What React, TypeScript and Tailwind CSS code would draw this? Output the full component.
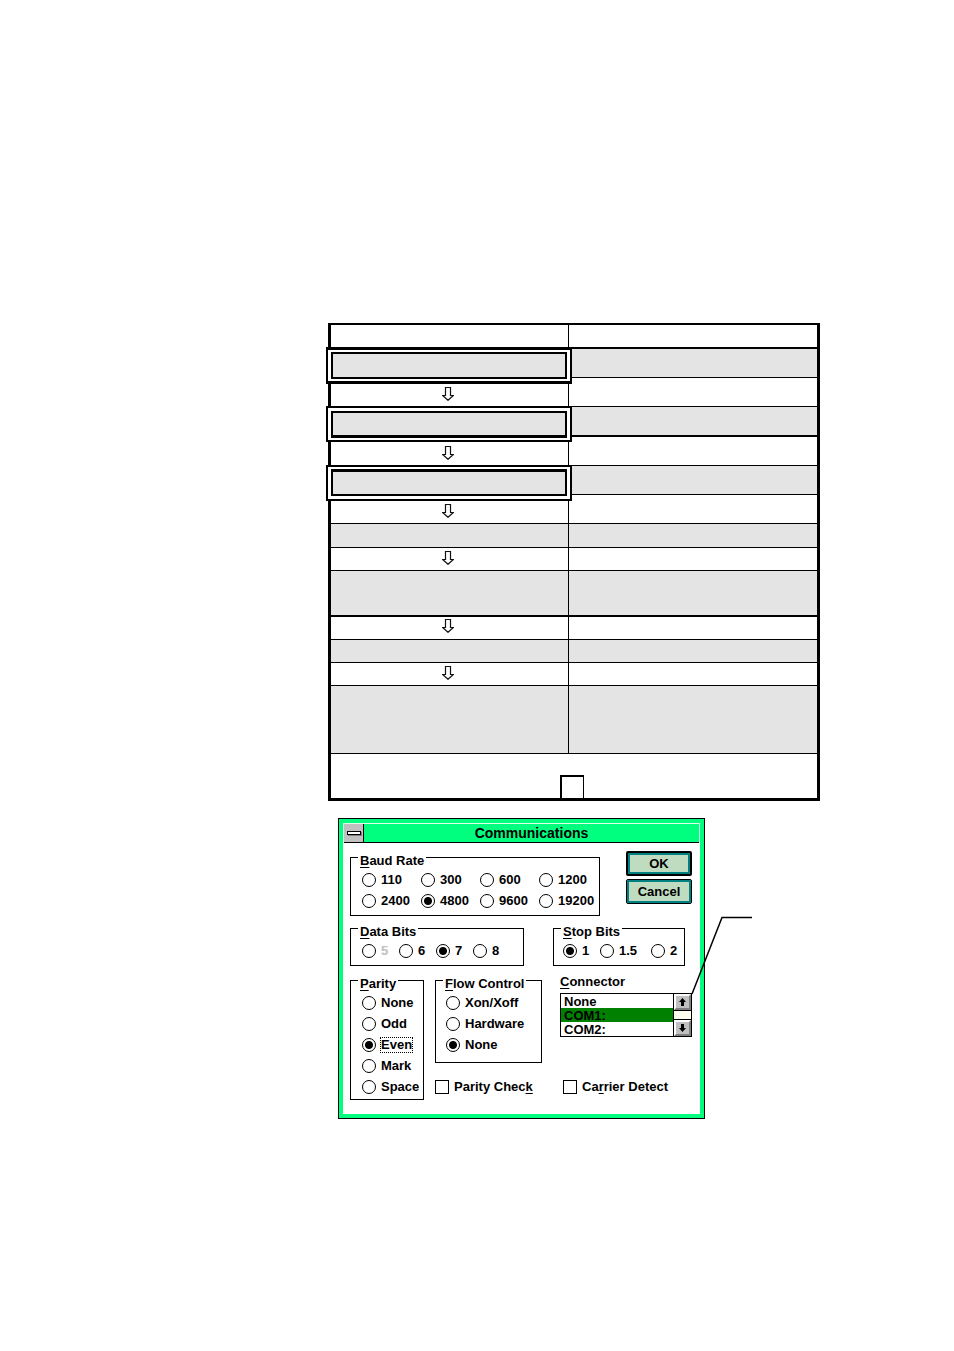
import { type ReactNode } from "react";

const DITHER =
  "bg-[#00ff80] bg-[conic-gradient(#00ff70_25%,#00ff8c_0_50%,#00ff70_0_75%,#00ff8c_0)] bg-[length:2px_2px]";

type Row = {
  height: string;
  shaded?: boolean;
  thick?: boolean;
  arrow?: string;
  frame?: [string, string];
};

const rows: Row[] = [
  { height: "h-6", thick: true },
  { height: "h-[29px]", shaded: true, frame: ["-top-[2px] h-[37px] border-y-[3px] py-[2px]", "border-2"] },
  { height: "h-[29px]", arrow: "pt-[9px]" },
  { height: "h-[30px]", shaded: true, thick: true, frame: ["-top-px h-9 pt-[3px] pb-[2px]", "border-2 border-b-[3px]"] },
  { height: "h-[29px]", arrow: "pt-[9px]" },
  { height: "h-[29px]", shaded: true, frame: ["-top-px h-9 pt-[2px] pb-[3px]", "border-2 border-t-[3px]"] },
  { height: "h-[29px]", arrow: "pt-[9px]" },
  { height: "h-6", shaded: true },
  { height: "h-[23px]", arrow: "pt-[3px]" },
  { height: "h-[46px]", shaded: true, thick: true },
  { height: "h-[23px]", arrow: "pt-[2px]" },
  { height: "h-[23px]", shaded: true },
  { height: "h-[23px]", arrow: "pt-[3px]" },
  { height: "h-[68px]", shaded: true },
];

function DownArrow() {
  return (
    <svg width="12" height="14" viewBox="0 0 12 14" className="block" aria-hidden="true">
      <path d="M3.5 .5h5v8h2.9L6 13.3.6 8.5h2.9z" fill="#fff" stroke="#111" strokeWidth="1.2" />
    </svg>
  );
}

function FlowTable() {
  return (
    <table className="w-[492px] table-fixed border-separate border-spacing-0 border-[3px] border-t-2 border-black">
      <colgroup>
        <col className="w-[238px]" />
        <col />
      </colgroup>
      <tbody>
        {rows.map((row, i) => {
          const line = row.thick ? "border-b-2" : "border-b";
          const fill = row.shaded ? "bg-[#e4e4e4]" : "bg-white";
          return (
            <tr key={i} className={row.height}>
              <td className={`relative border-r border-black p-0 align-top ${line} ${fill}`}>
                {row.arrow && <div className={`flex justify-center pr-[3px] ${row.arrow}`}><DownArrow /></div>}
                {row.frame && (
                  <div className={`absolute -left-[5px] z-10 flex w-[246px] border-2 border-black bg-white px-[3px] ${row.frame[0]}`}>
                    <div className={`flex-1 border-black bg-[#e4e4e4] ${row.frame[1]}`} />
                  </div>
                )}
              </td>
              <td className={`border-black p-0 ${line} ${fill}`} />
            </tr>
          );
        })}
        <tr className="h-11">
          <td colSpan={2} className="p-0 pr-1 align-bottom">
            <div className="mx-auto h-[23px] w-6 border-l-2 border-r border-t-2 border-black" />
          </td>
        </tr>
      </tbody>
    </table>
  );
}

function Group({ title, className, children }: { title: string; className: string; children: ReactNode }) {
  return (
    <fieldset className={`border border-black pl-[7px] ${className}`}>
      <legend className="px-0.5 pt-2 leading-4">
        <u className="underline-offset-2">{title[0]}</u>
        {title.slice(1)}
      </legend>
      {children}
    </fieldset>
  );
}

function Radio({ name, label, checked, disabled, focused }: {
  name: string;
  label: string;
  checked?: boolean;
  disabled?: boolean;
  focused?: boolean;
}) {
  return (
    <label className="flex h-[21px] items-center gap-1">
      <input
        type="radio"
        name={name}
        defaultChecked={checked}
        disabled={disabled}
        className="size-3.5 shrink-0 appearance-none rounded-full border border-black bg-white checked:bg-[radial-gradient(circle,#000_3.5px,#fff_4.5px)]"
      />
      <span
        className={`border border-dotted leading-[14px] ${focused ? "border-black" : "border-transparent"} ${disabled ? "text-[#c0c0c0]" : ""}`}
      >
        {label}
      </span>
    </label>
  );
}

function Check({ before = "", accel, after = "" }: { before?: string; accel: string; after?: string }) {
  return (
    <label className="flex items-center gap-[5px]">
      <input type="checkbox" className="size-3.5 appearance-none border border-black bg-white checked:bg-black" />
      <span>
        {before}
        <u className="underline-offset-2">{accel}</u>
        {after}
      </span>
    </label>
  );
}

function ScrollButton({ up }: { up?: boolean }) {
  return (
    <button
      type="button"
      aria-label={up ? "Scroll up" : "Scroll down"}
      className="flex h-4 w-full items-center justify-center border-2 border-b-[#808080] border-l-white border-r-[#808080] border-t-white bg-[#c0c0c0]"
    >
      <svg width="7" height="8" viewBox="0 0 7 8" className={up ? "" : "rotate-180"} aria-hidden="true">
        <path d="M3.5 0 7 4H5v4H2V4H0z" />
      </svg>
    </button>
  );
}

function Dialog() {
  const baud = ["110", "300", "600", "1200", "2400", "4800", "9600", "19200"];
  return (
    <form
      onSubmit={(e) => e.preventDefault()}
      className={`w-[367px] border border-black p-1 text-[13px] font-bold leading-4 text-black ${DITHER}`}
    >
      <header className="flex h-5 border border-b-0 border-[#d8ffe8]">
        <button
          type="button"
          aria-label="System menu"
          className="flex w-5 items-center justify-center border-b border-r border-black bg-[#c0c0c0]"
        >
          <span className="h-1 w-3.5 border border-black bg-white shadow-[1px_1px_0_#808080]" />
        </button>
        <h1 className="flex-1 border-b border-black text-center text-sm leading-[18px]">Communications</h1>
      </header>
      <div className="bg-white pb-[14px] pl-[7px] pr-2 pt-0.5">
        <div className="flex justify-between">
          <Group title="Baud Rate" className="w-[250px] pb-1">
            <div className="ml-1 grid grid-cols-[59px_59px_59px_1fr]">
              {baud.map((b) => (
                <Radio key={b} name="baud" label={b} checked={b === "4800"} />
              ))}
            </div>
          </Group>
          <div className="flex w-[66px] flex-col gap-[3px] pt-1.5">
            <button type="submit" className="h-[25px] rounded-[2px] border-2 border-black bg-[#c0dcc0] shadow-[inset_0_0_0_2px_#008080]">
              OK
            </button>
            <button type="button" className="h-[25px] rounded-[2px] border border-black bg-[#c0dcc0] shadow-[inset_0_0_0_2px_#008080]">
              Cancel
            </button>
          </div>
        </div>
        <div className="flex justify-between pr-[7px]">
          <Group title="Data Bits" className="w-[174px] pb-1">
            <div className="ml-1 grid grid-cols-[37px_37px_37px_1fr]">
              {["5", "6", "7", "8"].map((d) => (
                <Radio key={d} name="data" label={d} checked={d === "7"} disabled={d === "5"} />
              ))}
            </div>
          </Group>
          <Group title="Stop Bits" className="w-[132px] pb-1">
            <div className="ml-0.5 grid grid-cols-[37px_51px_1fr]">
              {["1", "1.5", "2"].map((s) => (
                <Radio key={s} name="stop" label={s} checked={s === "1"} />
              ))}
            </div>
          </Group>
        </div>
        <div className="mt-0.5 flex gap-[11px]">
          <Group title="Parity" className="w-[74px] pb-0.5">
            <div className="ml-1">
              {["None", "Odd", "Even", "Mark", "Space"].map((p) => (
                <Radio key={p} name="parity" label={p} checked={p === "Even"} focused={p === "Even"} />
              ))}
            </div>
          </Group>
          <div className="flex-1">
            <div className="flex justify-between">
              <Group title="Flow Control" className="w-[107px] pb-[7px]">
                <div className="ml-[3px]">
                  {["Xon/Xoff", "Hardware", "None"].map((f) => (
                    <Radio key={f} name="flow" label={f} checked={f === "None"} />
                  ))}
                </div>
              </Group>
              <div className="w-[132px] pt-1">
                <label htmlFor="connector" className="block pb-px leading-5">
                  <u className="underline-offset-2">C</u>onnector
                </label>
                <div className="flex h-11 border border-black">
                  <select
                    id="connector"
                    size={3}
                    defaultValue="COM1:"
                    className="flex-1 appearance-none overflow-hidden rounded-none border-0 bg-white p-0 font-bold text-black outline-none"
                  >
                    {["None", "COM1:", "COM2:"].map((c) => (
                      <option
                        key={c}
                        className="h-3.5 min-h-0 px-[3px] py-0 text-[13px] font-bold leading-[14px] text-black checked:bg-[#008000] checked:bg-[linear-gradient(#008000,#008000)]"
                      >
                        {c}
                      </option>
                    ))}
                  </select>
                  <div className="flex w-[18px] flex-col justify-between border-l border-black bg-[#fffff0]">
                    <div className="border-b border-black"><ScrollButton up /></div>
                    <div className="border-t border-black"><ScrollButton /></div>
                  </div>
                </div>
              </div>
            </div>
            <div className="mt-4 grid grid-cols-[128px_1fr]">
              <Check before="Parity Chec" accel="k" />
              <Check before="Ca" accel="r" after="rier Detect" />
            </div>
          </div>
        </div>
      </div>
    </form>
  );
}

export default function App() {
  return (
    <main className="min-h-screen bg-white pb-10 pl-[328px] pt-[323px] font-['Liberation_Sans',Arial,sans-serif]">
      <FlowTable />
      <div className="relative ml-2.5 mt-[17px] w-fit">
        <Dialog />
        <svg width="62" height="80" viewBox="0 0 62 80" className="absolute left-[353px] top-[98px]" aria-hidden="true">
          <path d="M61 1.5H31L1 78" fill="none" stroke="#000" strokeWidth="1.5" />
        </svg>
      </div>
    </main>
  );
}
